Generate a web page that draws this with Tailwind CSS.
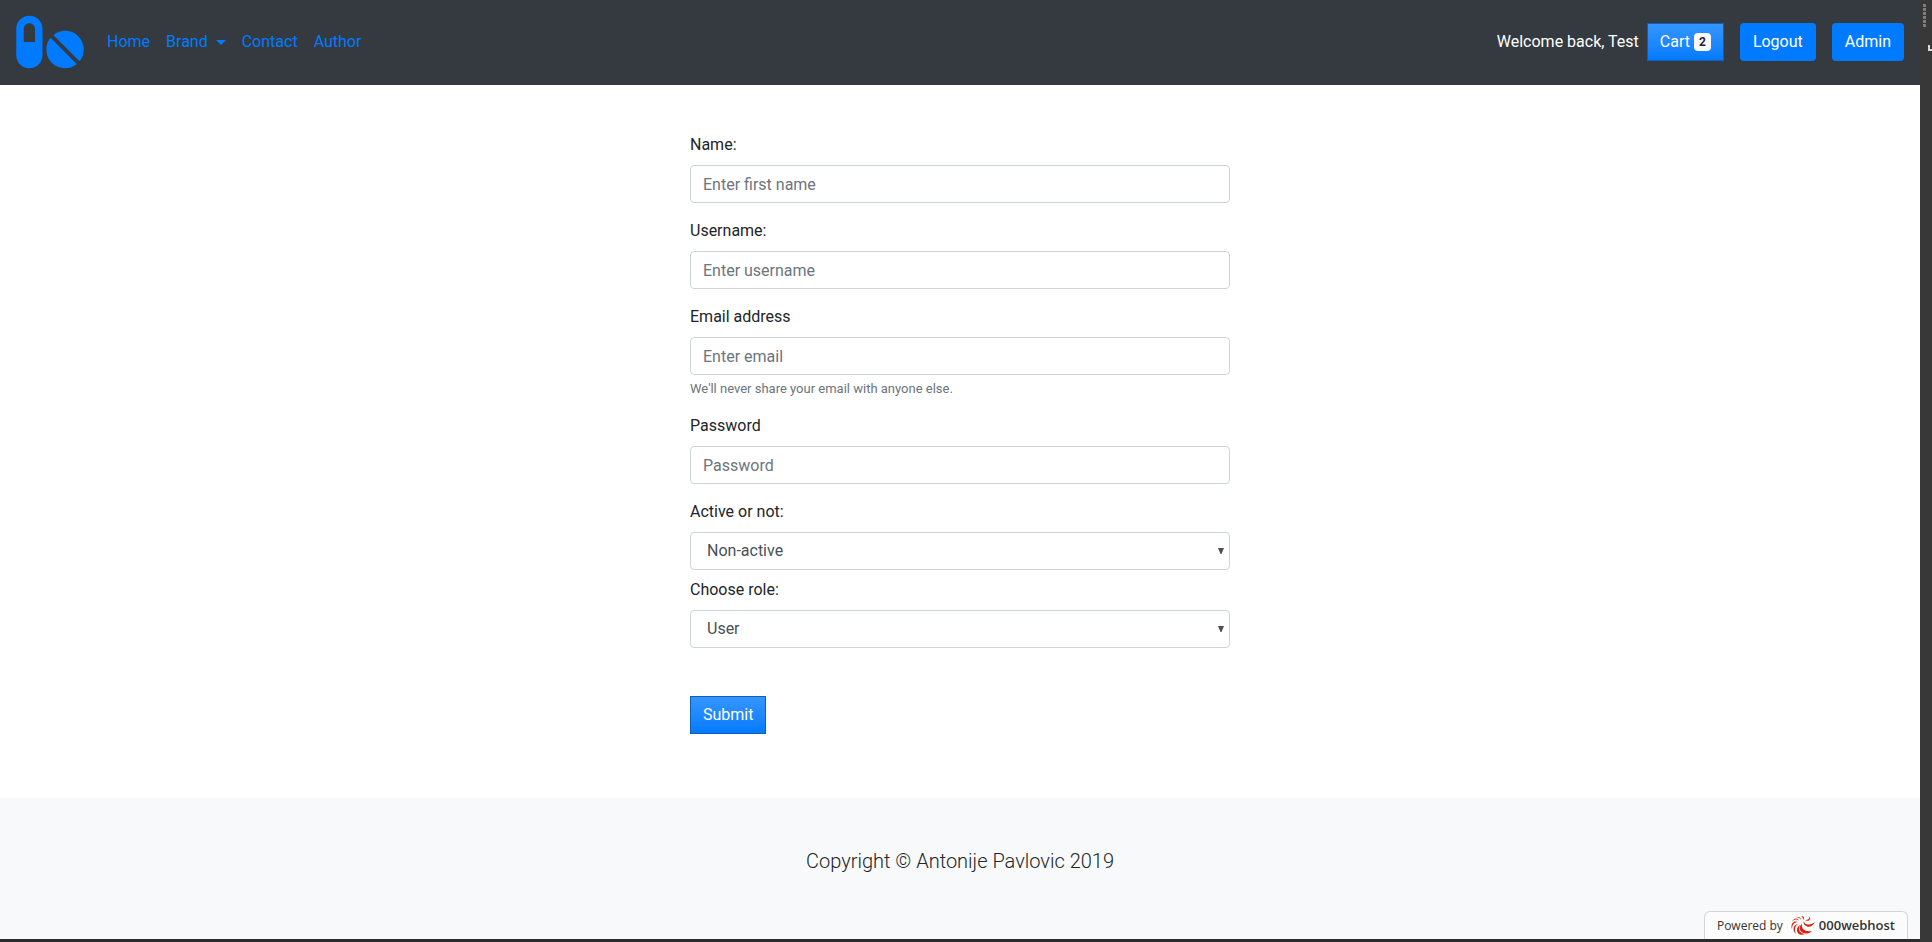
<!DOCTYPE html>
<html lang="en">
<head>
<meta charset="utf-8">
<meta name="viewport" content="width=device-width, initial-scale=1">
<title>Edit user</title>
<script src="https://cdn.jsdelivr.net/npm/@tailwindcss/browser@4"></script>
</head>
<body class="flex min-h-screen bg-white font-[Roboto,sans-serif] text-base text-[#212529]">
<div class="flex min-w-0 flex-1 flex-col">
  <header class="flex flex-wrap items-center bg-[#343a40] px-4 pt-3 pb-[13px]">
    <a href="#" aria-label="Pharmacy home" class="mr-[15px] text-[#007bff]">
      <svg class="block h-[60px] w-[68px]" viewBox="0 0 576 512" fill="currentColor" aria-hidden="true"><path d="M112 32C50.1 32 0 82.1 0 144v224c0 61.9 50.1 112 112 112s112-50.1 112-112V144c0-61.900-50.100-112-112-112zm48 224H64V144c0-26.500 21.500-48 48-48s48 21.500 48 48v112zm139.700-29.700c-3.500-3.500-9.400-3.100-12.300.8-45.300 62.500-40.400 150.100 15.900 206.400 56.300 56.300 143.900 61.200 206.400 15.900 4-2.900 4.300-8.800.8-12.300L299.700 226.300zm229.800-19c-56.300-56.300-143.900-61.200-206.400-15.900-4 2.900-4.300 8.800-.8 12.300l210.800 210.800c3.500 3.500 9.400 3.100 12.300-.8 45.300-62.600 40.500-150.100-15.900-206.400z"/></svg>
    </a>
    <nav class="flex items-center text-[#007bff]">
      <a href="#" class="p-2">Home</a>
      <a href="#" class="flex items-center gap-2 p-2">Brand
        <svg class="h-[5px] w-[10px]" viewBox="0 0 10 5" fill="currentColor" aria-hidden="true"><path d="M0 0h10L5 5z"/></svg>
      </a>
      <a href="#" class="p-2">Contact</a>
      <a href="#" class="p-2">Author</a>
    </nav>
    <div class="ml-auto flex items-center gap-4 text-white">
      <div class="flex items-center gap-2">
        <span>Welcome back, Test</span>
        <button type="button" class="flex h-[38px] items-center gap-1 border border-[#0f5fb5] bg-linear-to-b from-[#3395ff] to-[#007bff] px-3">Cart <span class="rounded bg-[#f8f9fa] px-[5px] text-xs leading-[18px] font-bold text-[#212529]">2</span></button>
      </div>
      <button type="button" class="h-[38px] rounded bg-[#007bff] px-[13px]">Logout</button>
      <button type="button" class="h-[38px] rounded bg-[#007bff] px-[13px]">Admin</button>
    </div>
  </header>

  <main class="px-4 pt-12 pb-16">
    <form class="mx-auto w-full max-w-[540px]">
      <div class="mb-4">
        <label for="name" class="mb-2 block">Name:</label>
        <input id="name" type="text" placeholder="Enter first name" class="block h-[38px] w-full rounded border border-[#ced4da] px-3 placeholder:text-[#6c757d]">
      </div>
      <div class="mb-4">
        <label for="username" class="mb-2 block">Username:</label>
        <input id="username" type="text" placeholder="Enter username" class="block h-[38px] w-full rounded border border-[#ced4da] px-3 placeholder:text-[#6c757d]">
      </div>
      <div class="mb-4">
        <label for="email" class="mb-2 block">Email address</label>
        <input id="email" type="email" placeholder="Enter email" aria-describedby="email-help" class="block h-[38px] w-full rounded border border-[#ced4da] px-3 placeholder:text-[#6c757d]">
        <small id="email-help" class="mt-1 block text-[13px] leading-[19px] text-[#6c757d]">We'll never share your email with anyone else.</small>
      </div>
      <div class="mb-4">
        <label for="password" class="mb-2 block">Password</label>
        <input id="password" type="password" placeholder="Password" class="block h-[38px] w-full rounded border border-[#ced4da] px-3 placeholder:text-[#6c757d]">
      </div>
      <div class="mb-2">
        <label for="active" class="mb-2 block">Active or not:</label>
        <div class="relative">
          <select id="active" class="block h-[38px] w-full appearance-none rounded border border-[#ced4da] bg-white px-4 text-[#495057]"><option>Non-active</option><option>Active</option></select>
          <svg class="pointer-events-none absolute top-4 right-[6px] size-[6px]" viewBox="0 0 6 6" fill="#495057" aria-hidden="true"><path d="M0 0h6L3.500 6h-1z"/></svg>
        </div>
      </div>
      <div class="mb-12">
        <label for="role" class="mb-2 block">Choose role:</label>
        <div class="relative">
          <select id="role" class="block h-[38px] w-full appearance-none rounded border border-[#ced4da] bg-white px-4 text-[#495057]"><option>User</option><option>Admin</option></select>
          <svg class="pointer-events-none absolute top-4 right-[6px] size-[6px]" viewBox="0 0 6 6" fill="#495057" aria-hidden="true"><path d="M0 0h6L3.500 6h-1z"/></svg>
        </div>
      </div>
      <button type="submit" class="block h-[38px] border border-[#0f5fb5] bg-linear-to-b from-[#3395ff] to-[#007bff] px-3 text-white">Submit</button>
    </form>
  </main>

  <footer class="relative grow border-b-3 border-[#2c2c2e] bg-[#f8f9fa] px-4 pt-12 pb-14">
    <p class="text-center text-xl leading-[30px] font-light">Copyright © Antonije Pavlovic 2019</p>
    <a href="#" class="absolute right-3 bottom-0 flex h-7 items-center rounded-t-md border border-b-0 border-[#d5d5d5] bg-[#fcfcfc] px-3 font-['Open_Sans',sans-serif] text-xs text-[#333333]">
      <span>Powered by</span>
      <svg class="mr-1 ml-2 h-5 w-6" viewBox="0 0 24 20" fill="#dc2115" aria-hidden="true">
        <path d="M13 5c0 4 5 5 11 1-2 4-6 6-9 4-2-1-3-3-2-5z"/>
        <path d="M11 8c-1 5 3 8 10 7-4 4-10 3-12-1-1-2 0-5 2-6z"/>
        <path d="M9 9c-2 4-1 8 5 9-4 2-8 0-8-4 0-2 1-4 3-5z"/>
        <path d="M7 8c-3 2-4 5-2 10C1 14 2 9 7 8z"/>
        <path d="M7 6c-4 0-6 3-6 7-2-5 2-9 6-7z"/>
        <path d="M8 5C6 3 3 3 1 6c1-4 6-5 7-1z"/>
        <path d="M10 4C9 2 7 1 4 2c3-2 6-1 6 2z"/>
        <path d="M12 4c0-2 0-3-2-4 3 0 4 2 2 4z"/>
        <path d="M14 4c3 0 5-1 4-4 3 4-1 6-4 4z"/>
      </svg>
      <span class="text-[13px] font-semibold">000webhost</span>
    </a>
  </footer>
</div>

<!-- Dark window edge with its drag handle -->
<aside class="relative w-3 shrink-0 overflow-hidden bg-[#383838]" aria-hidden="true">
  <div class="flex flex-col gap-px pt-1 pl-[3px]">
    <i class="size-[3px] bg-[#7d7d7d]"></i><i class="size-[3px] bg-[#7d7d7d]"></i><i class="size-[3px] bg-[#7d7d7d]"></i><i class="size-[3px] bg-[#7d7d7d]"></i><i class="size-[3px] bg-[#7d7d7d]"></i><i class="size-[3px] bg-[#7d7d7d]"></i>
  </div>
  <div class="mt-[18px] ml-auto h-[6px] w-1 border-b-2 border-l-2 border-[#d8d8d8]"></div>
</aside>
</body>
</html>
